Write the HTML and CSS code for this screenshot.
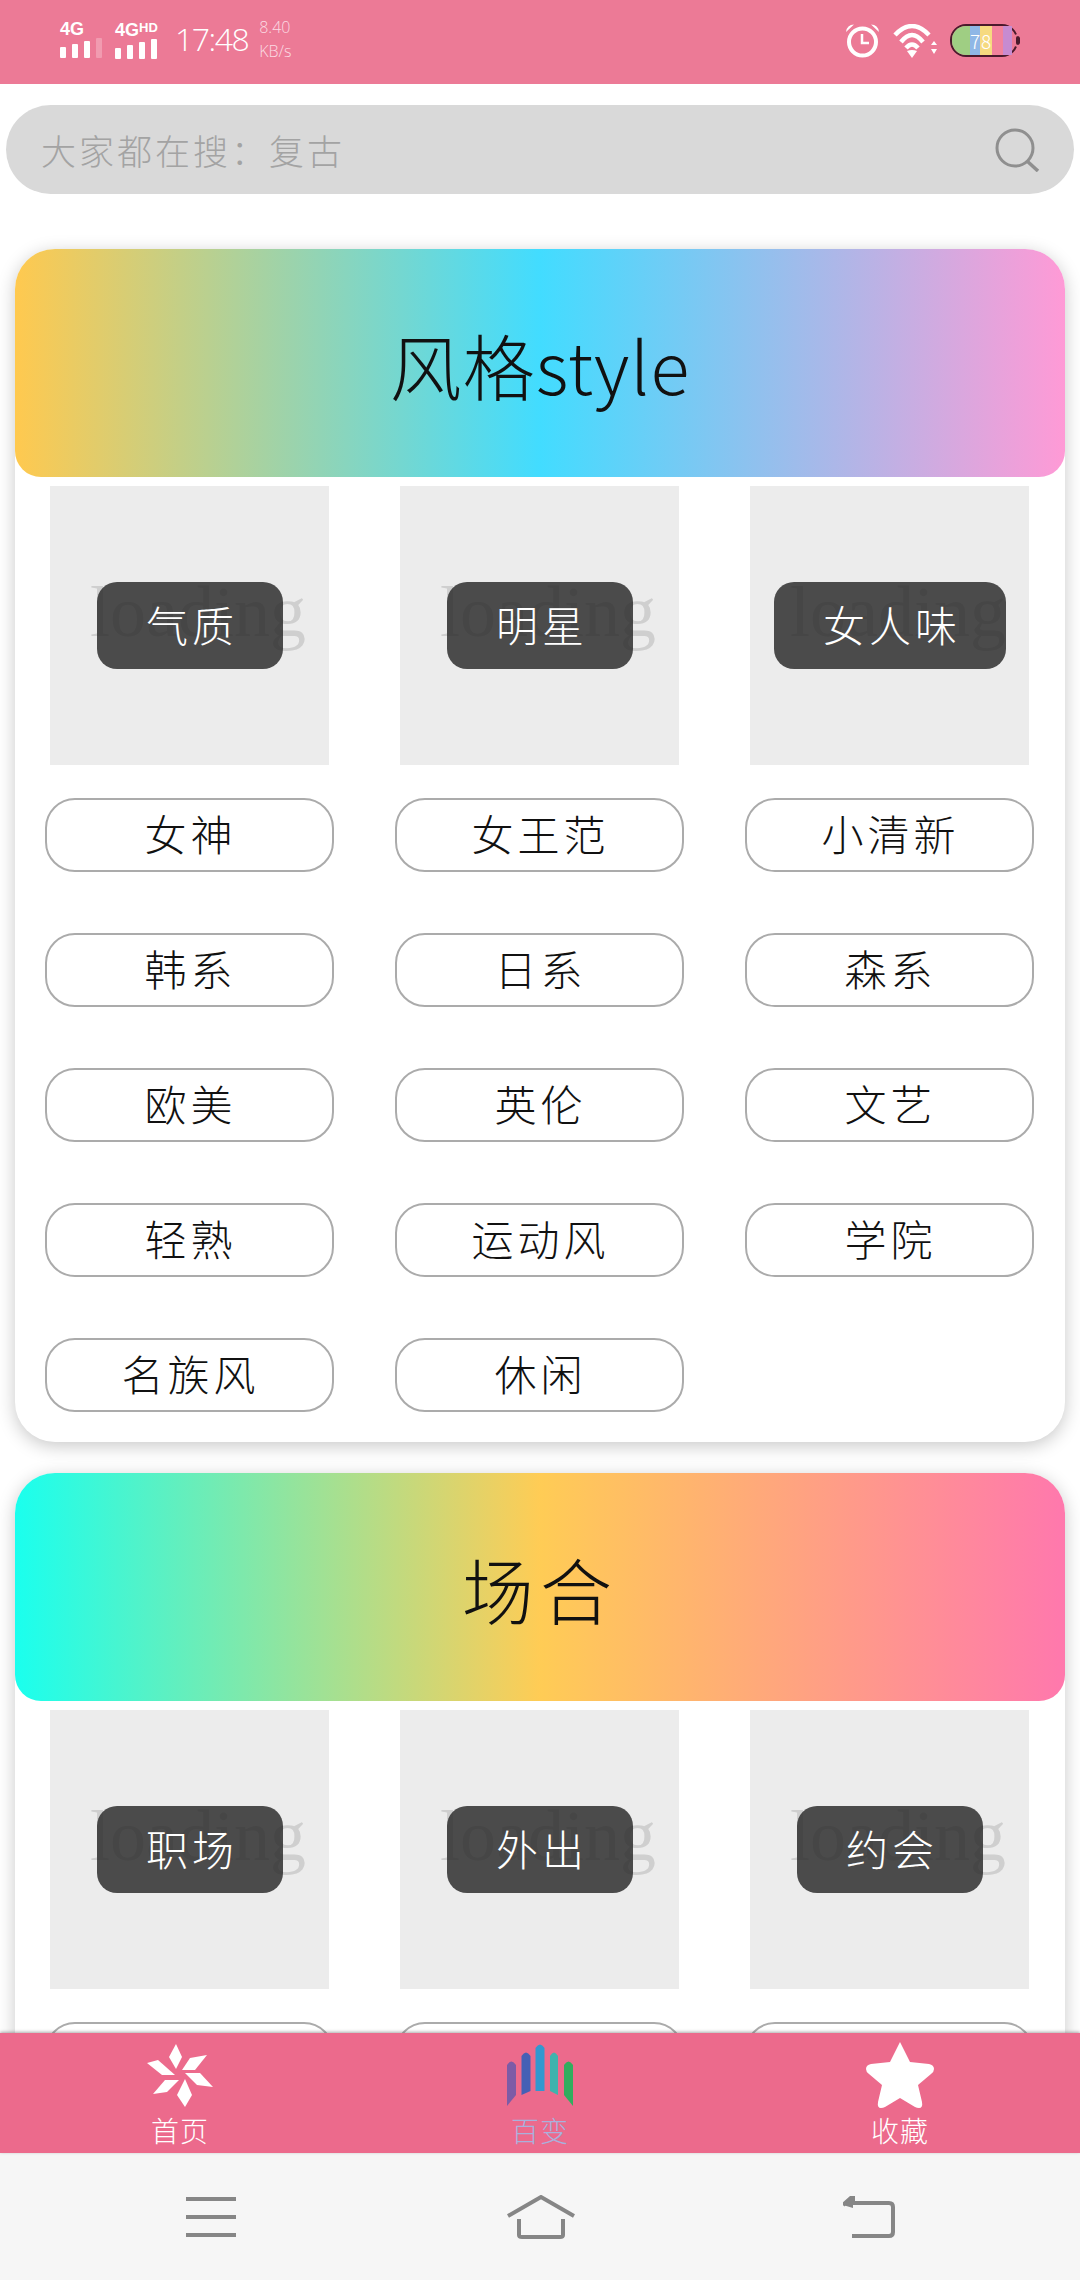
FILE: index.html
```html
<!doctype html>
<html lang="zh-CN">
<head>
	<meta charset="utf-8">
	<title>百变</title>
	<link rel="stylesheet" href="styles.css">
</head>
<body>
<div class="app">

	<div class="statusBar">
		<div class="statusLeft">
			<div class="signal">
				<span class="netName">4G</span>
				<div class="bars"><i class="b1"></i><i class="b2"></i><i class="b3"></i><i class="b4 off"></i></div>
			</div>
			<div class="signal signalHd">
				<span class="netName">4G<small>HD</small></span>
				<div class="bars"><i class="b1"></i><i class="b2"></i><i class="b3"></i><i class="b4"></i></div>
			</div>
			<span class="clock">17:48</span>
			<div class="speed"><span>8.40</span><span>KB/s</span></div>
		</div>
		<div class="statusRight">
			<svg class="alarm" viewBox="0 0 35 35" width="35" height="35">
				<circle cx="17.5" cy="19" r="13.5" fill="none" stroke="#fff" stroke-width="4"/>
				<path d="M17 11v9h7" fill="none" stroke="#fff" stroke-width="2.5"/>
				<path d="M1 9 9 1.500q-7 0-8 7.500zM34 9 26 1.500q7 0 8 7.500z" fill="#fff"/>
			</svg>
			<svg class="wifi" viewBox="0 0 46 34" width="46" height="34">
				<path d="M2 11Q19-7 36 11M8 18Q19 4 30 18M13 24Q19 17 25 24" fill="none" stroke="#fff" stroke-width="4.500"/>
				<path d="M14 27q5-2 10 0l-5 7z" fill="#fff"/>
				<path d="M38 21l3-4 3 4zM38 25l3 5 3-5z" fill="#fff"/>
			</svg>
			<div class="battery">
				<div class="batteryFill">
					<i class="cGreen"></i>
					<i class="cBlue">7</i>
					<i class="cYellow">8</i>
					<i class="cPink"></i>
					<i class="cPurple"></i>
				</div>
				<span class="batteryTip"></span>
			</div>
		</div>
	</div>

	<div class="content">
		<div class="searchBox">
			<span class="searchText">大家都在搜：复古</span>
			<svg viewBox="0 0 46 44" width="46" height="44">
				<circle cx="21" cy="20" r="18" fill="none" stroke="#8f8f8f" stroke-width="3"/>
				<path d="M33 33 44 43" fill="none" stroke="#8f8f8f" stroke-width="3.500"/>
			</svg>
		</div>

		<div class="card">
			<div class="cardHead headStyle">风格style</div>
			<div class="grid">
				<div class="tile"><span class="loading">loading</span><span class="tileName">气质</span></div>
				<div class="tile"><span class="loading">loading</span><span class="tileName">明星</span></div>
				<div class="tile"><span class="loading">loading</span><span class="tileName">女人味</span></div>
				<a class="pill">女神</a>
				<a class="pill">女王范</a>
				<a class="pill">小清新</a>
				<a class="pill">韩系</a>
				<a class="pill">日系</a>
				<a class="pill">森系</a>
				<a class="pill">欧美</a>
				<a class="pill">英伦</a>
				<a class="pill">文艺</a>
				<a class="pill">轻熟</a>
				<a class="pill">运动风</a>
				<a class="pill">学院</a>
				<a class="pill">名族风</a>
				<a class="pill">休闲</a>
			</div>
		</div>

		<div class="card">
			<div class="cardHead headPlace">场合</div>
			<div class="grid">
				<div class="tile"><span class="loading">loading</span><span class="tileName">职场</span></div>
				<div class="tile"><span class="loading">loading</span><span class="tileName">外出</span></div>
				<div class="tile"><span class="loading">loading</span><span class="tileName">约会</span></div>
				<a class="pill"></a>
				<a class="pill"></a>
				<a class="pill"></a>
			</div>
		</div>
	</div>

	<div class="tabBar">
		<div class="tab">
			<svg viewBox="0 0 66 64" width="66" height="64">
				<g fill="#fff">
					<polygon points="29,1 35,14 29,26 22,14"/>
					<polygon points="60,12 48,27 35,27 43,15"/>
					<polygon points="66,44 53,30 38,30 50,42"/>
					<polygon points="38,64 45,52 38,36 30,52"/>
					<polygon points="6,51 20,49 32,37 18,37"/>
					<polygon points="0,20 11,17 28,32 15,32"/>
				</g>
			</svg>
			<span>首页</span>
		</div>
		<div class="tab tabOn">
			<svg viewBox="0 0 66 62" width="66" height="62">
				<path d="M0 21q4.500-7 9 0v30l-9 11z" fill="#7d5ba6"/>
				<path d="M14.500 12q4.500-7 9 0v35l-9 4z" fill="#4560b5"/>
				<path d="M28.500 4q4.500-7 9 0v43h-9z" fill="#3198cf"/>
				<path d="M43 12q4-7 8 0v39l-8-4z" fill="#3fb3ad"/>
				<path d="M57 21q4.500-7 9 0v41l-9-11z" fill="#32ad5e"/>
			</svg>
			<span>百变</span>
		</div>
		<div class="tab">
			<svg viewBox="0 0 68 66" width="68" height="66">
				<path d="M34 0 44 20 63 22q5 1 5 5 0 3-3 5L52 43l4 17q1 6-3 6-2 0-4-1l-15-9-15 9q-2 1-4 1-4 0-3-6l4-17L3 32q-3-2-3-5 0-4 5-5l19-2z" fill="#fff"/>
			</svg>
			<span>收藏</span>
		</div>
	</div>

	<div class="navBar">
		<svg viewBox="0 0 50 42" width="50" height="42">
			<path d="M0 3h50M0 21h50M0 39h50" fill="none" stroke="#868686" stroke-width="4"/>
		</svg>
		<svg viewBox="0 0 70 44" width="70" height="44">
			<path d="M2 21 35 2l33 19" fill="none" stroke="#868686" stroke-width="4"/>
			<path d="M13 24v16q0 2 3 2h38q3 0 3-2V24" fill="none" stroke="#868686" stroke-width="4"/>
		</svg>
		<svg class="navBack" viewBox="0 0 52 42" width="52" height="42">
			<path d="M0 9 10 0v7h36q4 0 4 4v25q0 4-4 4H9" fill="none" stroke="#868686" stroke-width="4"/>
			<path d="M0 9 10 0v12z" fill="#868686"/>
		</svg>
	</div>
</div>
</body>
</html>
```

FILE: styles.css
```css
html, body {
	margin: 0;
	padding: 0;
}
body {
	font-family: "Noto Sans CJK SC", "Noto Sans", sans-serif;
	font-weight: 300;
	color: #111;
	background: #fff;
}
.app {
	display: flex;
	flex-direction: column;
	width: 1080px;
	height: 2280px;
	overflow: hidden;
}

/* status bar */
.statusBar {
	display: flex;
	justify-content: space-between;
	align-items: center;
	flex: none;
	height: 84px;
	padding: 0 62px 0 60px;
	box-sizing: border-box;
	background: #ec7a96;
	color: #fff;
}
.statusLeft, .statusRight {
	display: flex;
	align-items: center;
}
.statusLeft {
	padding-bottom: 6px;
}
.statusRight {
	gap: 13px;
	padding-bottom: 3px;
}
.signal {
	display: flex;
	flex-direction: column;
	width: 44px;
	margin-right: 11px;
}
.signalHd {
	margin-right: 16px;
}
.netName {
	font-family: "Liberation Sans", sans-serif;
	font-weight: 700;
	font-size: 18px;
	line-height: 16px;
	white-space: nowrap;
}
.netName small {
	font-size: 13px;
	vertical-align: 4px;
}
.bars {
	display: flex;
	align-items: flex-end;
	gap: 6px;
	height: 20px;
	margin-top: 1px;
}
.bars i {
	width: 6px;
	background: #fff;
	border-radius: 1px;
}
.bars .b1 { height: 11px; }
.bars .b2 { height: 14px; }
.bars .b3 { height: 17px; }
.bars .b4 { height: 20px; }
.bars .off { opacity: .25; }
.clock {
	font-family: "Open Sans", sans-serif;
	font-weight: 300;
	font-size: 32px;
	line-height: 40px;
	letter-spacing: -1.500px;
}
.speed {
	display: flex;
	flex-direction: column;
	gap: 10px;
	margin-left: 11px;
	font-family: "Open Sans", sans-serif;
	font-size: 16px;
	line-height: 14px;
	color: #fbdbe3;
}
.battery {
	position: relative;
	width: 64px;
	height: 29px;
	margin-left: -2px;
	border: 2px solid #4a1a2c;
	border-radius: 16px;
}
.batteryFill {
	display: flex;
	height: 100%;
	overflow: hidden;
	border-radius: 14px 0 0 14px;
}
.batteryFill i {
	display: block;
	font-style: normal;
	font-size: 19px;
	line-height: 29px;
	text-align: center;
	color: #fff;
}
.cGreen { width: 18px; background: #9fce83; }
.cBlue { width: 10px; background: #8fb7e6; }
.cYellow { width: 12px; background: #f6da80; }
.cPink { width: 11px; background: #f2829c; }
.cPurple { width: 9px; background: #c78bd0; }
.batteryTip {
	position: absolute;
	top: 10px;
	right: -4px;
	width: 4px;
	height: 9px;
	border-radius: 2px;
	background: #4a1a2c;
	outline: 2px solid #ec7a96;
}

/* scrolling part */
.content {
	flex: 1;
	min-height: 0;
	overflow: hidden;
}
.searchBox {
	display: flex;
	justify-content: space-between;
	align-items: center;
	height: 89px;
	margin: 21px 6px 55px;
	padding: 0 34px 0 35px;
	border-radius: 45px;
	background: #d9d9d9;
	box-sizing: border-box;
}
.searchText {
	font-size: 35px;
	letter-spacing: 3px;
	color: #a3a3a3;
}
.card {
	margin: 0 15px 31px;
	padding-bottom: 30px;
	border-radius: 40px;
	background: #fff;
	box-shadow: 0 4px 18px rgba(0, 0, 0, .22);
}
.cardHead {
	display: flex;
	justify-content: center;
	align-items: center;
	height: 228px;
	border-radius: 40px 40px 26px 26px;
	font-size: 72px;
	letter-spacing: 1px;
}
.headStyle {
	background: linear-gradient(to right, #ffc94f, #42dcff 50%, #ff9ad6);
}
.headPlace {
	background: linear-gradient(to right, #1affee, #ffcc55 50%, #ff78ad);
	letter-spacing: 6px;
}
.grid {
	display: grid;
	grid-template-columns: repeat(3, 350px);
	justify-items: center;
	row-gap: 61px;
	padding-top: 9px;
	margin-left: -1px;
}
.tile {
	position: relative;
	display: flex;
	justify-content: center;
	align-items: center;
	width: 279px;
	height: 279px;
	margin-bottom: -28px;
	background: #ececec;
}
.loading {
	position: absolute;
	top: 86px;
	left: 18px;
	right: 0;
	font-family: "Liberation Serif", serif;
	font-weight: 400;
	font-size: 72px;
	line-height: 80px;
	text-align: center;
	color: #cfcfcf;
}
.tileName {
	position: relative;
	margin-left: 2px;
	padding: 0 45px 0 49px;
	height: 87px;
	box-sizing: border-box;
	border-radius: 20px;
	background: rgba(35, 35, 35, .8);
	font-size: 42px;
	line-height: 84px;
	letter-spacing: 4px;
	text-align: center;
	color: #fff;
}
.pill {
	display: block;
	width: 289px;
	height: 74px;
	padding-left: 3px;
	box-sizing: border-box;
	border: 2px solid #ababab;
	border-radius: 30px;
	font-size: 42px;
	line-height: 66px;
	letter-spacing: 4px;
	text-align: center;
}

/* bottom tabs */
.tabBar {
	display: grid;
	grid-template-columns: repeat(3, 360px);
	flex: none;
	height: 120px;
	position: relative;
	background: #ec6a8c;
	box-shadow: 0 -1px 3px rgba(90, 90, 90, .5);
}
.tab {
	display: flex;
	flex-direction: column;
	align-items: center;
	padding-top: 9px;
	font-size: 28px;
	line-height: 36px;
	letter-spacing: 1px;
	color: #fff;
}
.tab svg {
	flex: none;
	height: 66px;
}
.tab span {
	margin-top: 4px;
}
.tabOn {
	color: #a9b1dc;
}
.navBar {
	display: grid;
	grid-template-columns: repeat(3, 330px);
	justify-items: center;
	align-items: center;
	flex: none;
	height: 127px;
	padding-left: 46px;
	box-sizing: border-box;
	background: #f6f6f6;
}
.navBack {
	margin-right: 5px;
}
```
